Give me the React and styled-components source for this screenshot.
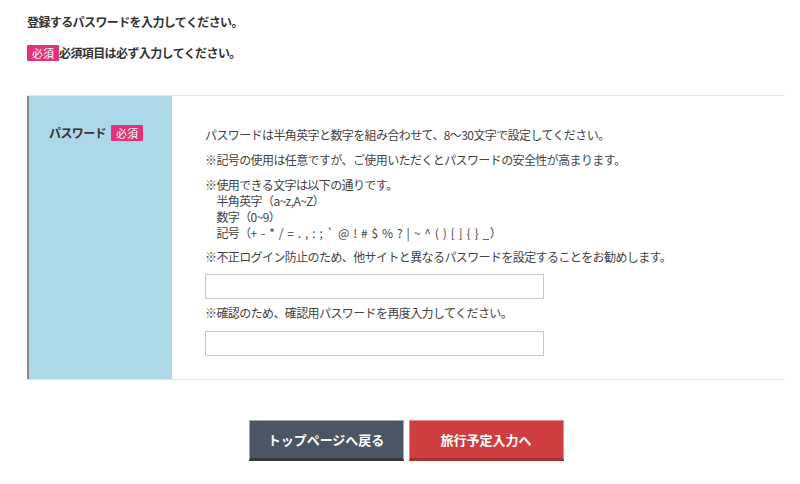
import styled, { createGlobalStyle } from 'styled-components';

const GlobalStyle = createGlobalStyle`
	* {
		box-sizing: border-box;
	}
	body {
		margin: 0;
		background: #fff;
		color: #333;
		font-family: 'Noto Sans CJK JP', 'Noto Sans', sans-serif;
		font-size: 12px;
		letter-spacing: -0.6px;
	}
`;

const Wrap = styled.div`
	width: 758px;
	margin-left: 27px;
	padding-top: 14px;
`;

const Lead = styled.p`
	margin: 0;
	font-weight: bold;
	font-size: 12px;
	line-height: 16px;
	display: flex;
	align-items: center;
	margin-bottom: ${(props) => props.$mb || 0}px;
`;

const Badge = styled.span`
	display: inline-block;
	background: #e0327a;
	color: #fff;
	font-size: 11px;
	font-weight: normal;
	line-height: 16px;
	padding: 0 5px;
	border-radius: 1px;
	letter-spacing: 0;
	margin-left: ${(props) => props.$ml || 0}px;
`;

const Table = styled.div`
	display: grid;
	grid-template-columns: 145px 1fr;
	margin-top: 34px;
	border-top: 1px solid #e6e6e6;
	border-bottom: 1px solid #e6e6e6;
`;

const Th = styled.div`
	background: #add8e8;
	border-left: 2px solid #8a8a8a;
	padding: 29px 0 0 20px;
	font-weight: bold;
	display: flex;
	align-items: flex-start;
	line-height: 16px;
	height: 100%;
`;

const Td = styled.div`
	padding: 31px 0 23px 33px;
	color: #444;
`;

const Note = styled.p`
	margin: 0 0 ${(props) => props.$mb ?? 9}px;
	line-height: 16px;
	white-space: pre;
`;

const Symbols = styled.span`
	letter-spacing: 0.6px;
`;

const Input = styled.input`
	display: block;
	width: 339px;
	height: 25px;
	border: 1px solid #c8c8c8;
	margin: 0 0 ${(props) => props.$mb || 0}px;
	outline: none;
`;

const Buttons = styled.nav`
	display: flex;
	justify-content: center;
	gap: 5px;
	margin-top: 40px;
`;

const Button = styled.button`
	width: 155px;
	height: 41px;
	border: 1px solid ${(props) => (props.$red ? '#e08a8a' : '#aaa')};
	border-bottom: 3px solid ${(props) => (props.$red ? '#a83232' : '#3a3a3a')};
	background: ${(props) => (props.$red ? '#cf3e3f' : '#4a5664')};
	color: #fff;
	font-family: inherit;
	font-size: 13px;
	font-weight: bold;
	letter-spacing: 0;
	cursor: pointer;
`;

function App() {
	return (
		<>
			<GlobalStyle />
			<Wrap>
				<Lead $mb={15}>登録するパスワードを入力してください。</Lead>
				<Lead>
					<Badge>必須</Badge>必須項目は必ず入力してください。
				</Lead>

				<Table>
					<Th>
						パスワード<Badge $ml={5}>必須</Badge>
					</Th>
					<Td>
						<Note>パスワードは半角英字と数字を組み合わせて、8～30文字で設定してください。</Note>
						<Note>※記号の使用は任意ですが、ご使用いただくとパスワードの安全性が高まります。</Note>
						<Note $mb={8}>
							{'※使用できる文字は以下の通りです。\n　半角英字（a~z,A~Z）\n　数字（0~9）\n　記号（'}
							<Symbols>{'+ - * / = . , : ; ` @ ! # $ % ? | ~ ^ ( ) [ ] { } _'}</Symbols>
							{'）'}
						</Note>
						<Note $mb={9}>※不正ログイン防止のため、他サイトと異なるパスワードを設定することをお勧めします。</Note>
						<Input type="password" $mb={6} />
						<Note $mb={10}>※確認のため、確認用パスワードを再度入力してください。</Note>
						<Input type="password" />
					</Td>
				</Table>

				<Buttons>
					<Button>トップページへ戻る</Button>
					<Button $red>旅行予定入力へ</Button>
				</Buttons>
			</Wrap>
		</>
	);
}

export default App;
